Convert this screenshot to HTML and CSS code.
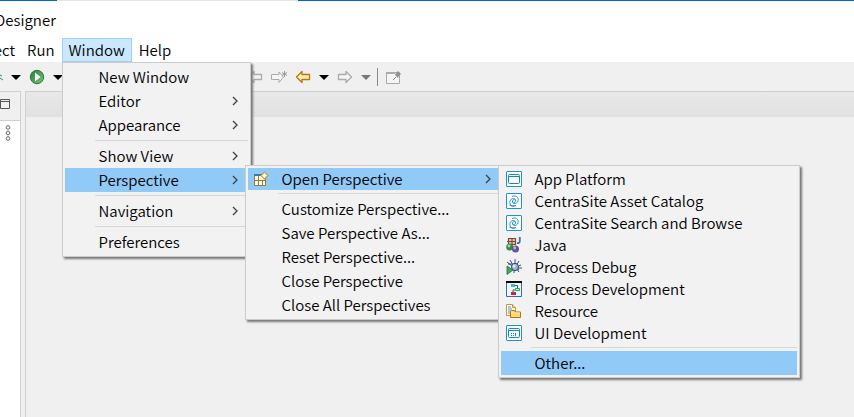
FILE: index.html
```html
<!DOCTYPE html>
<html lang="en">
<head>
<meta charset="utf-8">
<title>Designer</title>
<link rel="stylesheet" href="styles.css">
</head>
<body>
<svg class="defs" aria-hidden="true">
  <symbol id="chevron" viewBox="0 0 8 10"><path d="M2 1l4 4-4 4" fill="none" stroke="#404040" stroke-width="1.3"/></symbol>
  <symbol id="caret" viewBox="0 0 10 16"><path d="M0 6h10L5 11z" fill="currentColor"/></symbol>
  <symbol id="back" viewBox="0 0 16 16"><path d="M1.500 8L7 2.500V5.500H14.500V10.500H7V13.500z" stroke="currentColor" stroke-width="1.3" stroke-linejoin="round"/></symbol>
  <symbol id="forward" viewBox="0 0 16 16"><path d="M14.500 8L9 2.500V5.500H1.500V10.500H9V13.500z" stroke="currentColor" stroke-width="1.3" stroke-linejoin="round"/></symbol>
  <symbol id="swirl" viewBox="0 0 16 16"><rect x=".5" y=".5" width="15" height="15" rx=".5" fill="#fff" stroke="#1d93d2"/><path d="M6 3.500c5-2 7.500 2 5.500 5.500-1.300 2-4.500 2-5 0-.4-1.800 1-3 2.300-2.300M10 12.500c-5 2-7.500-2-5.500-5.500 1.300-2 4.500-2 5 0 .4 1.800-1 3-2.300 2.300M3.500 12c2 1.500 4 1.500 6.500.5" fill="none" stroke="#1787bd" stroke-width=".9"/></symbol>
</svg>

<header class="titlebar"><h1>Designer</h1></header>

<nav class="menubar">
  <button class="cut">ect</button>
  <button>Run</button>
  <div class="open-menu">
    <button class="active">Window</button>
    <ul class="menu menu-window">
      <li><button>New Window</button></li>
      <li><button>Editor<svg class="chevron"><use href="#chevron"/></svg></button></li>
      <li><button>Appearance<svg class="chevron"><use href="#chevron"/></svg></button></li>
      <li class="separator"></li>
      <li><button>Show View<svg class="chevron"><use href="#chevron"/></svg></button></li>
      <li class="selected"><button>Perspective<svg class="chevron"><use href="#chevron"/></svg></button>
        <ul class="menu menu-perspective">
          <li class="selected with-icon"><button>
            <svg class="icon" viewBox="0 0 16 16"><path d="M1.500 3.500h11v11h-11z" fill="#fff6dc" stroke="#8d7b4d"/><path d="M1 3h8v2H1z" fill="#4077b4"/><path d="M5.500 5v9M2 9.500h10M9.500 9v5" stroke="#8d7b4d" fill="none"/><path d="M11.500 .7l1.600 2.200 2.400 1.600-2.400 1.600-1.600 2.200-1.600-2.200-2.400-1.600 2.400-1.600z" fill="#fff2a5" stroke="#ad842c" stroke-width=".9"/><path d="M11.500 3v3M10 4.500h3" stroke="#fff"/></svg>
            Open Perspective<svg class="chevron"><use href="#chevron"/></svg></button>
            <ul class="menu menu-list">
              <li class="with-icon"><button><svg class="icon" viewBox="0 0 16 16"><rect x=".5" y=".5" width="15" height="15" rx=".5" fill="#fff" stroke="#1d93d2"/><rect x="2.500" y="3.500" width="11" height="9" rx="1" fill="#f8fcff" stroke="#1787bd"/><path d="M3 5.500h10" stroke="#1787bd"/></svg>App Platform</button></li>
              <li class="with-icon"><button><svg class="icon"><use href="#swirl"/></svg>CentraSite Asset Catalog</button></li>
              <li class="with-icon"><button><svg class="icon"><use href="#swirl"/></svg>CentraSite Search and Browse</button></li>
              <li class="with-icon"><button><svg class="icon" viewBox="0 0 16 16"><path d="M2.500 1.500h7v6h-7zM1 4.500h9M6 1v7" fill="#e9c9aa" stroke="#774b35" stroke-width="1.200"/><path d="M13.800 0v4q0 2.500-2.800 2" fill="none" stroke="#3b71a5" stroke-width="1.800"/><circle cx="3.700" cy="10" r="3.500" fill="#36884b"/><circle cx="3" cy="9" r="1.400" fill="#a4d7a3"/><circle cx="9.500" cy="12" r="3.500" fill="#63539c"/><circle cx="8.700" cy="11" r="1.400" fill="#c2b6e2"/></svg>Java</button></li>
              <li class="with-icon"><button><svg class="icon" viewBox="0 0 16 16"><path d="M4 1l3 5M9 0v5M2 5h4l7 6M13 2l-3 5M15 6l-5 2M16 9H9M13 13l-3-4M8 14V8M1 3l5 4" stroke="#263a78" fill="none" stroke-width=".9"/><ellipse cx="9" cy="8" rx="3.500" ry="3.700" fill="#9db4ce" stroke="#304780"/><circle cx="8" cy="7" r="1.500" fill="#e0edf5"/><path d="M1 7l6 4-6 4.500z" fill="#49a65d" stroke="#197238" stroke-width=".8"/></svg>Process Debug</button></li>
              <li class="with-icon"><button><svg class="icon" viewBox="0 0 16 16"><path d="M.5 1v14.500h15V1" fill="#edf5fc" stroke="#426c9b"/><path d="M0 0h16v2H0z" fill="#050505"/><path d="M9 4.500h2.500V7M9 9H7v3" fill="none" stroke="#395979"/><path d="M5 3h4v3H5z" fill="#4bafe2"/><path d="M9.500 7.500h4v2h-4z" fill="#b6efbf" stroke="#31a849"/><path d="M5 11h5v3H5z" fill="#ce2340"/></svg>Process Development</button></li>
              <li class="with-icon"><button><svg class="icon" viewBox="0 0 16 16"><path d="M.5 1.500h6l3 3v8h-9z" fill="#fff8df" stroke="#b49a60"/><path d="M6.500 1.500v3h3" fill="#e7d59f" stroke="#b49a60"/><path d="M2 4h3M2 6h4M2 8h3M2 10h2" stroke="#6691bf"/><path d="M4.500 14.500v-6l1-1h3l1 1.500h5v5.500z" fill="#ffd76b" stroke="#ad731e"/><path d="M5 10h9" stroke="#fff0a9"/></svg>Resource</button></li>
              <li class="with-icon"><button><svg class="icon" viewBox="0 0 16 16"><rect x=".5" y=".5" width="15" height="15" rx=".5" fill="#fff" stroke="#1d93d2"/><rect x="2.500" y="3.500" width="11" height="9" rx="1" fill="#f8fcff" stroke="#1787bd"/><path d="M3 5.500h10M5 8.500h1M7 8.500h1M9 8.500h1M5 10.500h1M7 10.500h1M9.500 8v3" stroke="#1787bd"/></svg>UI Development</button></li>
              <li class="separator"></li>
              <li class="selected"><button>Other...</button></li>
            </ul>
          </li>
          <li class="separator"></li>
          <li><button>Customize Perspective...</button></li>
          <li><button>Save Perspective As...</button></li>
          <li><button>Reset Perspective...</button></li>
          <li><button>Close Perspective</button></li>
          <li><button>Close All Perspectives</button></li>
        </ul>
      </li>
      <li class="separator"></li>
      <li><button>Navigation<svg class="chevron"><use href="#chevron"/></svg></button></li>
      <li class="separator"></li>
      <li><button>Preferences</button></li>
    </ul>
  </div>
  <button>Help</button>
</nav>

<div class="toolbar">
  <button aria-label="Debug"><svg class="sliver" viewBox="0 0 3 16"><path d="M0 6l2 1M0 9l3 2" stroke="#3f8065" fill="none"/></svg></button>
  <button aria-label="Debug options"><svg class="caret"><use href="#caret"/></svg></button>
  <button aria-label="Run"><svg class="icon" viewBox="0 0 16 16"><defs><linearGradient id="green" x2="1" y2="1"><stop stop-color="#267c42"/><stop offset="1" stop-color="#7bc66b"/></linearGradient></defs><circle cx="8" cy="8" r="6.700" fill="url(#green)" stroke="#287c3e"/><path d="M6 3.500v9L11.500 8z" fill="#fff"/></svg></button>
  <button aria-label="Run options"><svg class="caret"><use href="#caret"/></svg></button>
  <span class="tool-space"></span>
  <button aria-label="Previous edit" class="muted"><svg class="icon"><use href="#back"/></svg></button>
  <button aria-label="Next edit" class="muted"><svg class="icon" viewBox="0 0 16 16"><path d="M12.500 8L8 3v2.500H.5v5H8v3z" fill="#f5f5f5" stroke="currentColor"/><path d="M13.500 2v6M11 3.500l5 3M16 3.500l-5 3" stroke="#999"/></svg></button>
  <button aria-label="Back" class="gold"><svg class="icon"><use href="#back"/></svg></button>
  <button aria-label="Back history"><svg class="caret"><use href="#caret"/></svg></button>
  <button aria-label="Forward" class="muted"><svg class="icon"><use href="#forward"/></svg></button>
  <button aria-label="Forward history" class="dim"><svg class="caret"><use href="#caret"/></svg></button>
  <span class="tool-divider"></span>
  <button aria-label="Pin editor"><svg class="icon" viewBox="0 0 16 16"><path d="M.5 3.500h13v11H.5z" fill="#f5f5f5" stroke="#aaa"/><path d="M0 3h9v2H0z" fill="#aaa"/><path d="M7 11l3-3" stroke="#888"/><path d="M9 6l3 3 1-2 2-2-3-3-2 2z" fill="#929292"/></svg></button>
</div>

<main class="workspace">
  <aside class="side">
    <div class="side-head"><button aria-label="Restore"><svg class="restore" viewBox="0 0 10 10"><path d="M.5 .5H9.500v9H.5zM.5 2.500h9" fill="none" stroke="#555"/></svg></button></div>
    <div class="side-body"><svg class="dots" viewBox="0 0 6 16"><g fill="#fff" stroke="#666"><circle cx="3" cy="2.500" r="1.800"/><circle cx="3" cy="8" r="1.800"/><circle cx="3" cy="13.500" r="1.800"/></g></svg></div>
  </aside>
  <section class="editor"><div class="tabs"></div></section>
</main>
</body>
</html>
```

FILE: styles.css
```css
* { box-sizing: border-box; }

body {
  margin: 0;
  min-height: 100vh;
  display: flex;
  flex-direction: column;
  overflow: hidden;
  background: #f0f0f0;
  color: #000;
  font: 350 15px/24px "Noto Sans CJK KR", "Open Sans", sans-serif;
}

button {
  border: 0;
  padding: 0;
  background: none;
  color: inherit;
  font: inherit;
  text-align: left;
  white-space: nowrap;
}

svg { display: block; flex: none; }
.defs { position: absolute; width: 0; height: 0; }
.icon { width: 16px; height: 16px; }

.titlebar {
  height: 38px;
  padding-top: 8px;
  background: linear-gradient(90deg, #0067c8 57px, #e5e5e5 57px 298px, #0067c8 298px) top / 100% 1px no-repeat #fff;
}

.titlebar h1 {
  margin: 0 0 0 -5px;
  font-size: 15px;
  font-weight: inherit;
}

.menubar { display: flex; height: 24px; background: #fff; }
.menubar > button { padding: 0 7px; }
.menubar > .cut { width: 20px; padding: 0 5px 0 0; direction: rtl; }
.open-menu { position: relative; }

.active {
  height: 24px;
  padding: 0 6px;
  border: 1px solid #99d1ff;
  background: #cce8ff;
  line-height: 22px;
}

.menu {
  position: absolute;
  z-index: 1;
  margin: 0;
  padding: 2px;
  border: 1px solid #ccc;
  background: #f2f2f2;
  box-shadow: 2px 2px 2px #777;
  list-style: none;
}

.menu-window { top: 100%; left: 0; width: 189px; }
.menu-perspective { top: -3px; left: calc(100% - 3px); width: 259px; }
.menu-list { top: -3px; left: calc(100% - 3px); width: 302px; }

.menu li { position: relative; }

.menu button {
  display: flex;
  align-items: center;
  width: 100%;
  height: 24px;
  padding: 0 9px 0 34px;
}

.menu .with-icon > button { height: 22px; padding-left: 5px; }
.with-icon .icon { margin-right: 13px; }
.selected > button { background: #91c9f7; }
.chevron { width: 8px; height: 10px; margin-left: auto; }

.separator {
  height: 7px;
  margin-left: 30px;
  background: linear-gradient(#d7d7d7, #d7d7d7) center / 100% 1px no-repeat;
}

.toolbar { display: flex; align-items: center; gap: 8px; height: 29px; }
.sliver { width: 3px; height: 16px; }
.caret { width: 10px; height: 16px; }
.tool-space { width: 168px; }
.tool-divider { width: 1px; height: 18px; margin-left: -2px; background: #888; }
.muted { color: #aaa; fill: #f5f5f5; }
.gold { color: #b87508; fill: #fff0b8; }
.dim { color: #777; }

.workspace { display: flex; flex: 1; gap: 4px; }

.side {
  display: flex;
  flex-direction: column;
  width: 21px;
  border: solid #d0d0d0;
  border-width: 1px 1px 0 0;
}

.side-head { height: 29px; padding-top: 7px; border-bottom: 1px solid #d0d0d0; }
.side-head button { display: block; }
.restore { width: 10px; height: 10px; }
.side-body { flex: 1; padding: 4px 5px; background: #fff; }
.dots { width: 6px; height: 16px; }

.editor { flex: 1; border: solid #d0d0d0; border-width: 1px 0 0 1px; }
.tabs { height: 25px; background: linear-gradient(#e8e8e8, #e1e1e1); }
```
